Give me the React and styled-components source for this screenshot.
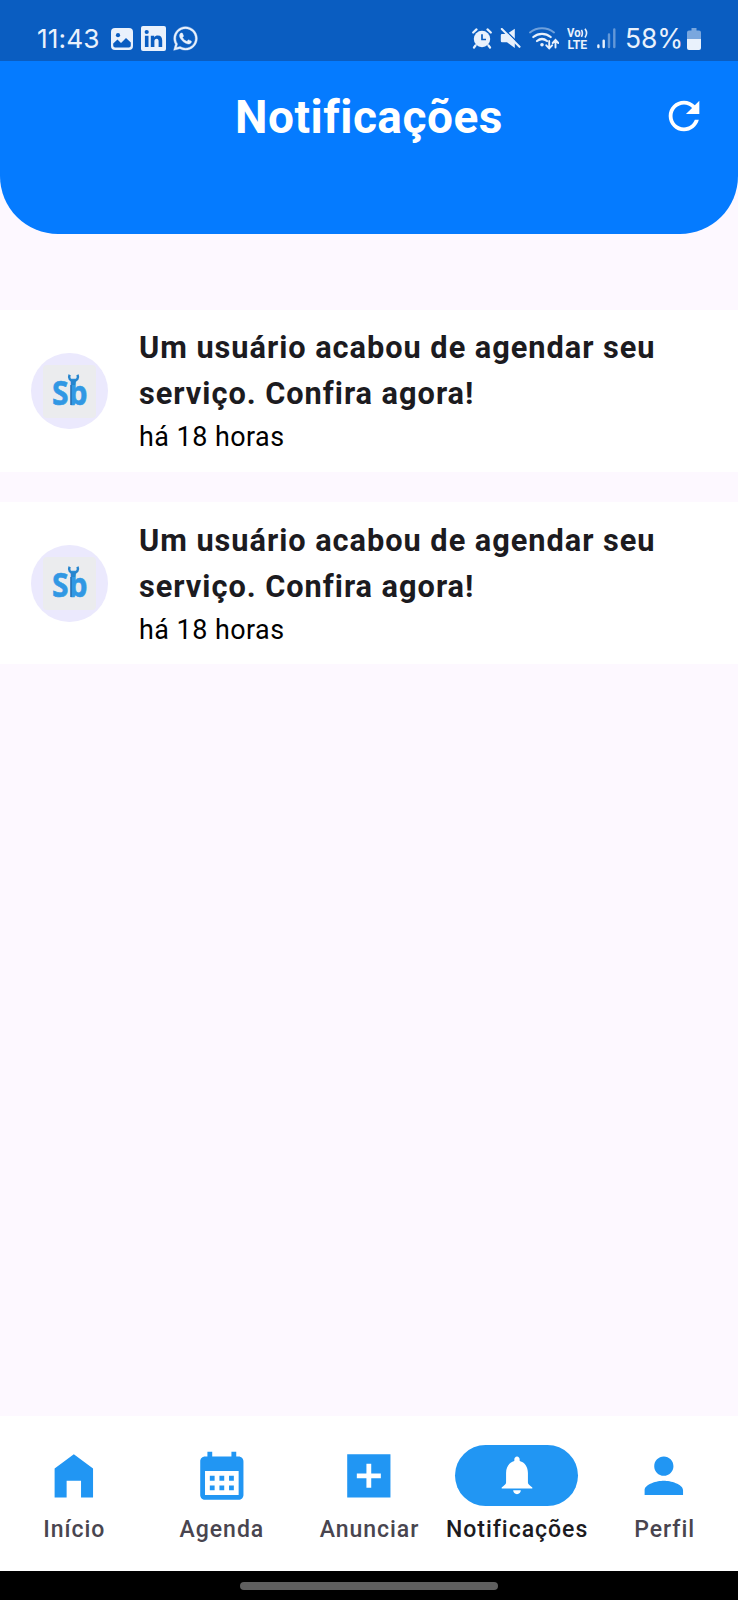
import React from "react";
import styled, { createGlobalStyle } from "styled-components";
import { FaWhatsapp } from "react-icons/fa";

const GlobalStyle = createGlobalStyle`
  *, *::before, *::after { box-sizing: border-box; }
  html, body { margin: 0; padding: 0; }
  body { background: #fdf8ff; font-family: Roboto, "Liberation Sans", sans-serif; }
  svg { display: block; flex: none; }
`;

const Screen = styled.div`
  display: flex;
  flex-direction: column;
  width: 738px;
  height: 1600px;
  overflow: hidden;
  background: #fdf8ff;
`;

const StatusBar = styled.div`
  display: flex;
  justify-content: space-between;
  align-items: center;
  height: 61px;
  flex: none;
  padding: 16px 37px 0 37px;
  background: #0a5dc1;
  color: #e9f1fc;
`;

const StatusGroup = styled.div`
  display: flex;
  align-items: center;
  gap: ${(p) => p.$gap}px;
`;

const StatusText = styled.span`
  width: ${(p) => p.$width}px;
  margin-bottom: ${(p) => p.$lift || 0}px;
  font-family: Inter, Roboto, sans-serif;
  font-size: ${(p) => p.$size}px;
  line-height: 30px;
  letter-spacing: ${(p) => p.$spacing}px;
  white-space: nowrap;
`;

const Header = styled.header`
  display: grid;
  grid-template-columns: 90px 1fr 90px;
  align-items: start;
  height: 173px;
  flex: none;
  padding-top: 29px;
  background: #057bff;
  border-radius: 0 0 58px 58px;
`;

const HeaderTitle = styled.h1`
  grid-column: 2;
  margin: 0;
  color: #fff;
  font-size: 46px;
  font-weight: 700;
  line-height: 54px;
  letter-spacing: 0.5px;
  text-align: center;
`;

const IconButton = styled.button`
  display: flex;
  justify-content: flex-start;
  margin: 3px 0 0;
  padding: 0;
  border: 0;
  background: none;
  color: #fff;
`;

const RefreshButton = styled(IconButton)`
  justify-content: flex-end;
  padding-right: 31px;
`;

const List = styled.main`
  display: flex;
  flex: 1;
  flex-direction: column;
  gap: 30.4px;
  padding-top: 76px;
`;

const Card = styled.article`
  display: flex;
  align-items: center;
  gap: 31.5px;
  height: 162px;
  padding: 0 31px;
  background: #fff;
`;

const Avatar = styled.div`
  display: flex;
  align-items: center;
  justify-content: center;
  width: 76.5px;
  height: 76.5px;
  flex: none;
  border-radius: 50%;
  background: #ebe9fd;
`;

const CardText = styled.div`
  flex: 1;
`;

const CardTitle = styled.p`
  margin: 0;
  color: #1c1b1f;
  font-size: 30.75px;
  font-weight: 700;
  line-height: 46.1px;
  letter-spacing: 0.96px;
`;

const CardTime = styled.p`
  margin: 1.2px 0 0;
  color: #000;
  font-size: 26.9px;
  line-height: 38.4px;
  letter-spacing: 0.48px;
`;

const NavBar = styled.nav`
  display: grid;
  grid-template-columns: repeat(5, 1fr);
  height: 155px;
  flex: none;
  padding-top: 28.6px;
  background: #fff;
`;

const NavItem = styled.a`
  display: flex;
  flex-direction: column;
  align-items: center;
  gap: 8.5px;
  color: ${(p) => (p.$active ? "#1c1b1f" : "#49454f")};
`;

const Indicator = styled.span`
  display: flex;
  align-items: center;
  justify-content: center;
  width: 123px;
  height: 61.5px;
  border-radius: 31px;
  background: ${(p) => (p.$active ? "#2196f3" : "transparent")};
  color: ${(p) => (p.$active ? "#fff" : "#2196f3")};
`;

const NavLabel = styled.span`
  padding-left: 1px;
  font-size: 23.06px;
  font-weight: 500;
  line-height: 30px;
  letter-spacing: 0.96px;
  white-space: nowrap;
`;

const GestureBar = styled.div`
  display: flex;
  justify-content: center;
  height: 29px;
  flex: none;
  padding-top: 11px;
  background: #000;
`;

const GestureHandle = styled.span`
  width: 258px;
  height: 8px;
  border-radius: 4px;
  background: #5f5f5f;
`;

function Icon({ d, size }) {
  return (
    <svg width={size} height={size} viewBox="0 0 24 24" fill="currentColor">
      <path d={d} />
    </svg>
  );
}

const PATHS = {
  refresh:
    "M17.65 6.35C16.2 4.9 14.21 4 12 4c-4.42 0-7.99 3.58-7.99 8s3.57 8 7.99 8c3.73 0 6.84-2.55 7.73-6h-2.08c-.82 2.33-3.04 4-5.65 4-3.31 0-6-2.69-6-6s2.69-6 6-6c1.66 0 3.14.69 4.22 1.78L13 11h7V4l-2.35 2.35z",
  home: "M4 21V9l8-6 8 6v12h-5v-7H9v7z",
  calendar:
    "M19 4h-1V2h-2v2H8V2H6v2H5c-1.11 0-1.99.9-1.99 2L3 20c0 1.1.89 2 2 2h14c1.1 0 2-.9 2-2V6c0-1.1-.9-2-2-2zm0 16H5V10h14v10zM9 14H7v-2h2v2zm4 0h-2v-2h2v2zm4 0h-2v-2h2v2zm-8 4H7v-2h2v2zm4 0h-2v-2h2v2zm4 0h-2v-2h2v2z",
  add: "M21 3H3v18h18V3zm-4 10h-4v4h-2v-4H7v-2h4V7h2v4h4v2z",
  bell: "M12 22c1.1 0 2-.9 2-2h-4c0 1.1.9 2 2 2zM17.7 15.9V11c0-3.2-1.6-5.6-4.3-6.3V4c0-.9-.6-1.6-1.4-1.6s-1.4.7-1.4 1.6v.7C7.9 5.4 6.3 7.8 6.3 11v4.9c0 .9-.9 1.5-2.3 2.6V19h16v-.5c-1.4-1.1-2.3-1.7-2.3-2.6z",
  person:
    "M12 12c2.21 0 4-1.79 4-4s-1.79-4-4-4-4 1.79-4 4 1.79 4 4 4zm0 2c-2.67 0-8 1.34-8 4v2h16v-2c0-2.66-5.33-4-8-4z",
};

function GalleryIcon() {
  return (
    <svg width="22" height="22" viewBox="0 0 22 22" fill="none">
      <rect width="22" height="22" rx="4" fill="currentColor" />
      <circle cx="7" cy="7.2" r="2.1" fill="#0a5dc1" />
      <path d="M2.2 15.6 6.5 11.5 10 15l5-5 4.8 4.6V17.5a2 2 0 0 1-2 2H4.2a2 2 0 0 1-2-2z" fill="#0a5dc1" />
    </svg>
  );
}

function LinkedInIcon() {
  return (
    <svg width="25" height="25" viewBox="0 0 25 25">
      <rect width="25" height="25" rx="2" fill="currentColor" />
      <g fill="#0a5dc1">
        <circle cx="5.7" cy="6" r="2.1" />
        <path d="M3.9 9.8h3.6v11.2H3.9zM9.8 9.8h3.4v1.6c.8-1.3 2-1.9 3.6-1.9 3 0 4.4 1.9 4.4 5V21h-3.6v-5.8c0-1.6-.6-2.5-1.9-2.5-1.5 0-2.3 1-2.3 2.7V21H9.8z" />
      </g>
    </svg>
  );
}

const WhatsAppIcon = styled(FaWhatsapp)`
  margin-left: -2px;
  stroke: currentColor;
  stroke-width: 8px;
`;

function AlarmIcon() {
  return (
    <svg width="20" height="21" viewBox="0 0 20 21">
      <circle cx="10" cy="11" r="8.2" fill="currentColor" />
      <g stroke="currentColor" strokeWidth="2.2" strokeLinecap="round" fill="none">
        <path d="M1.2 4.5 4.5 1.4M18.8 4.5 15.5 1.4M3.5 17.5 2 19.5M16.5 17.5 18 19.5" />
      </g>
      <path d="M10 6.2V11.5H14" stroke="#0a5dc1" strokeWidth="1.7" fill="none" />
    </svg>
  );
}

function MuteIcon() {
  return (
    <svg width="21" height="21" viewBox="0 0 21 21">
      <path d="M2 6h5L14.8.8V20L7 14.2H2a1.200 1.200 0 0 1-1.200-1.200V7.200A1.200 1.200 0 0 1 2 6z" fill="currentColor" />
      <path d="M3.600.8 20.500 17.200" stroke="#0a5dc1" strokeWidth="1.500" />
      <path d="M1.800 1 19.500 18.800" stroke="currentColor" strokeWidth="2.100" strokeLinecap="round" />
    </svg>
  );
}

function WifiIcon() {
  return (
    <svg width="30" height="23" viewBox="0 0 30 23" fill="none" stroke="currentColor" strokeLinecap="round">
      <path d="M1 5.5c7-5.7 17-5.7 24 0" strokeWidth="1.9" opacity=".45" />
      <path d="M4.3 10c5.2-4.3 12.2-4.3 17.4 0" strokeWidth="2.2" />
      <path d="M8 14c3-2.4 7-2.4 10 0" strokeWidth="2.2" />
      <circle cx="13" cy="17.7" r="1.8" fill="currentColor" stroke="none" />
      <path d="M20.2 14v7M17.3 18.3l2.9 3 2.9-3M26.5 20.5v-7M23.7 16l2.8-3 2.8 3" strokeWidth="1.9" />
    </svg>
  );
}

const LteText = styled.text`
  font: 700 12px Roboto, sans-serif;
  fill: currentColor;
`;

function VolteIcon() {
  return (
    <svg width="22" height="28" viewBox="0 0 22 28">
      <LteText x="0" y="12.3" textLength="13.5" lengthAdjust="spacingAndGlyphs">Vo</LteText>
      <LteText x="0.6" y="24.3" textLength="19.6" lengthAdjust="spacingAndGlyphs">LTE</LteText>
      <path d="M14.4 4.8q2 3.2 0 7M18 3.8q3.2 4.2 0 8.7" stroke="currentColor" strokeWidth="1.6" fill="none" />
    </svg>
  );
}

function SignalIcon() {
  return (
    <svg width="20" height="21" viewBox="0 0 20 21" stroke="currentColor" strokeWidth="2.4" strokeLinecap="round">
      <path d="M1.4 17.5v1.6M6.7 12.6v6.5" />
      <path d="M12 6.5v12.6M17.3 1.5v17.6" opacity=".4" />
    </svg>
  );
}

function BatteryIcon() {
  return (
    <svg width="14" height="22" viewBox="0 0 14 22" fill="currentColor">
      <path d="M4.5 0h5v2.5H12a2 2 0 0 1 2 2V11H0V4.5a2 2 0 0 1 2-2h2.5z" opacity=".5" />
      <path d="M0 11h14v9a2 2 0 0 1-2 2H2a2 2 0 0 1-2-2z" />
    </svg>
  );
}

const LogoText = styled.text`
  font: 700 34.5px "Open Sans", sans-serif;
  fill: #3198e4;
  stroke: #3198e4;
  stroke-width: 0.6px;
`;

function ServiceLogo() {
  return (
    <svg width="53" height="53" viewBox="0 0 53 53">
      <rect width="53" height="53" rx="4" fill="#ebecee" />
      <LogoText x="9" y="40.3" textLength="35.5" lengthAdjust="spacingAndGlyphs">Sb</LogoText>
      <path d="M28 20v20" stroke="#1769aa" strokeWidth="1.3" />
      <path
        d="M26.6 9.8c-1.4 3.4.5 6 3.9 6s5.5-2.6 4-6"
        stroke="#2685ce"
        strokeWidth="2.5"
        fill="none"
      />
      <path d="M28 15.5h5l-1 4.5h-4z" fill="#2685ce" />
    </svg>
  );
}

const NOTIFICATIONS = [
  { id: 1, title: "Um usuário acabou de agendar seu serviço. Confira agora!", time: "há 18 horas" },
  { id: 2, title: "Um usuário acabou de agendar seu serviço. Confira agora!", time: "há 18 horas" },
];

const TABS = [
  { label: "Início", icon: "home" },
  { label: "Agenda", icon: "calendar" },
  { label: "Anunciar", icon: "add" },
  { label: "Notificações", icon: "bell", active: true },
  { label: "Perfil", icon: "person" },
];

export default function App() {
  return (
    <Screen>
      <GlobalStyle />
      <StatusBar>
        <StatusGroup $gap={8}>
          <StatusText $size={26.3} $width={66} $spacing={0.1}>11:43</StatusText>
          <GalleryIcon />
          <LinkedInIcon />
          <WhatsAppIcon size={27} />
        </StatusGroup>
        <StatusGroup $gap={8}>
          <AlarmIcon />
          <MuteIcon />
          <WifiIcon />
          <VolteIcon />
          <SignalIcon />
          <StatusText $size={26.5} $width={54} $spacing={-0.1} $lift={2}>58%</StatusText>
          <BatteryIcon />
        </StatusGroup>
      </StatusBar>
      <Header>
        <HeaderTitle>Notificações</HeaderTitle>
        <RefreshButton aria-label="Atualizar">
          <Icon d={PATHS.refresh} size={46} />
        </RefreshButton>
      </Header>
      <List>
        {NOTIFICATIONS.map((n) => (
          <Card key={n.id}>
            <Avatar>
              <ServiceLogo />
            </Avatar>
            <CardText>
              <CardTitle>{n.title}</CardTitle>
              <CardTime>{n.time}</CardTime>
            </CardText>
          </Card>
        ))}
      </List>
      <NavBar>
        {TABS.map((t) => (
          <NavItem key={t.label} $active={t.active}>
            <Indicator $active={t.active}>
              <Icon d={PATHS[t.icon]} size={t.active ? 46 : 57.66} />
            </Indicator>
            <NavLabel>{t.label}</NavLabel>
          </NavItem>
        ))}
      </NavBar>
      <GestureBar>
        <GestureHandle />
      </GestureBar>
    </Screen>
  );
}
